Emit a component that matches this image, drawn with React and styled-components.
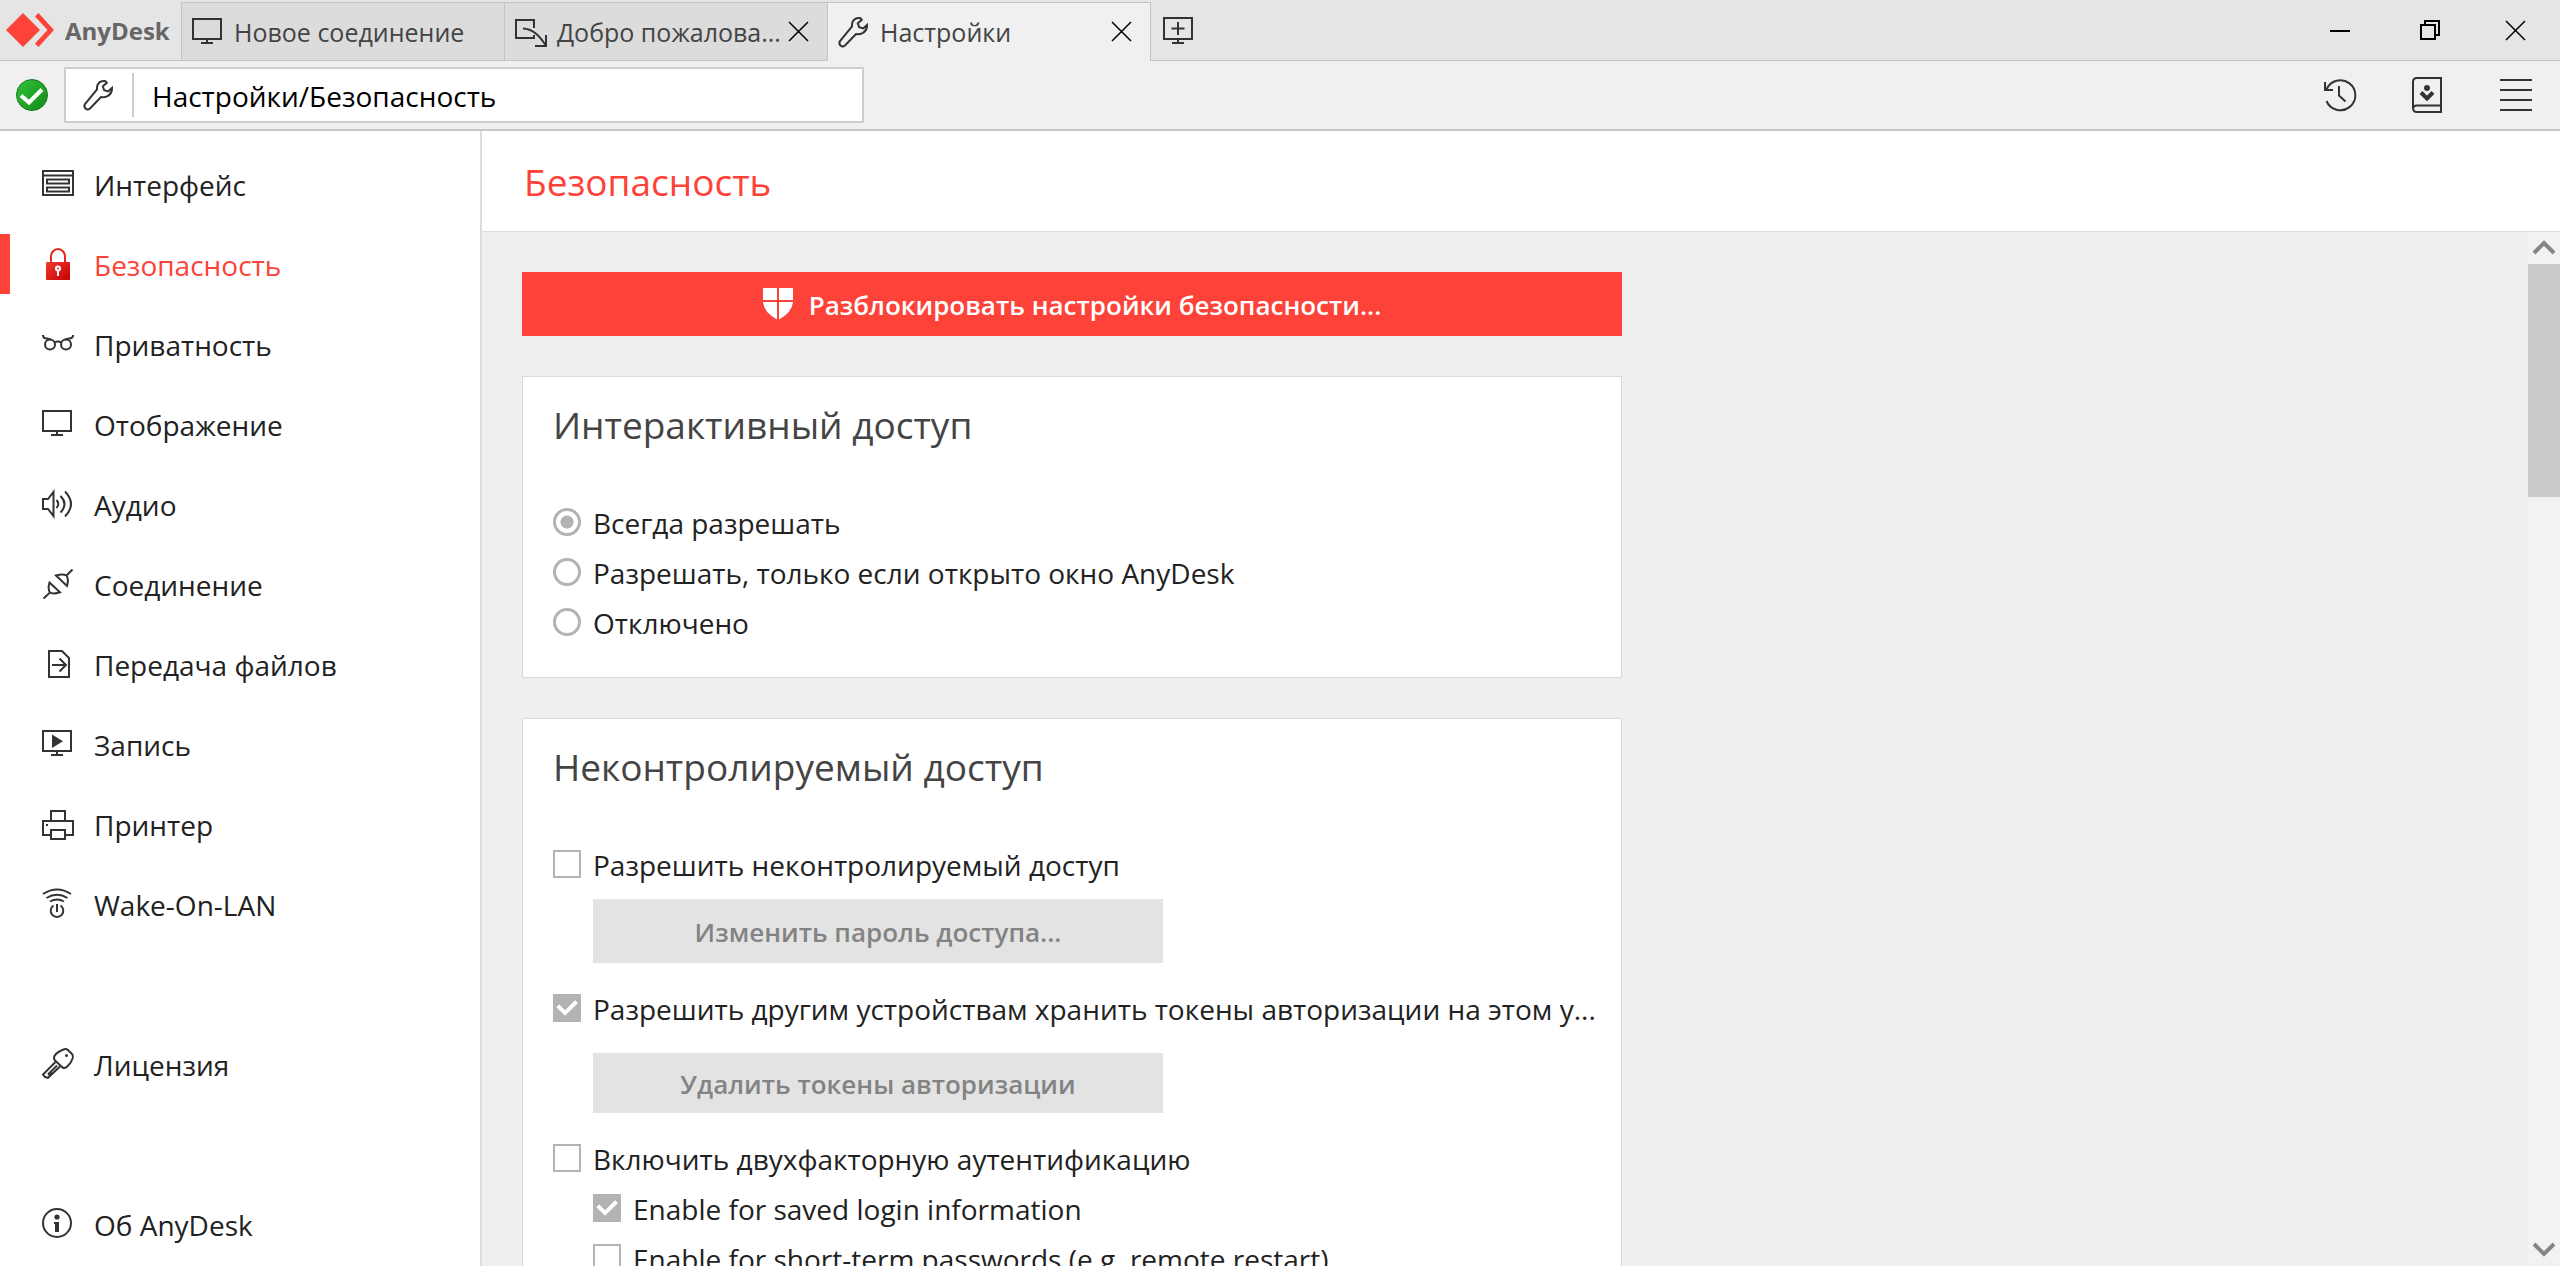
import React, { useState } from "react";
import styled, { createGlobalStyle } from "styled-components";

const menuGroups = [
  [
    { id: "interface", label: "Интерфейс" },
    { id: "security", label: "Безопасность" },
    { id: "privacy", label: "Приватность" },
    { id: "display", label: "Отображение" },
    { id: "audio", label: "Аудио" },
    { id: "connection", label: "Соединение" },
    { id: "files", label: "Передача файлов" },
    { id: "recording", label: "Запись" },
    { id: "printer", label: "Принтер" },
    { id: "wol", label: "Wake-On-LAN" },
  ],
  [{ id: "license", label: "Лицензия" }],
  [{ id: "about", label: "Об AnyDesk" }],
];

const accessModes = [
  { id: "always", label: "Всегда разрешать" },
  { id: "window", label: "Разрешать, только если открыто окно AnyDesk" },
  { id: "disabled", label: "Отключено" },
];

const shapes = {
  interface: (
    <>
      <path d="M1 3h30v24H1zM1 7.500h30" />
      <path d="M5 11.500h22v4H5zM5 19.500h22v4H5z" />
    </>
  ),
  security: (
    <>
      <defs>
        <linearGradient id="lock" x1="0" y1="0" x2="1" y2="1">
          <stop offset="0" stopColor="#f23a30" />
          <stop offset="1" stopColor="#c40000" />
        </linearGradient>
      </defs>
      <path d="M9 15V8.500a7 7.500 0 0 1 14 0V15" stroke="#e8261f" />
      <rect x="4" y="14" width="24" height="18" rx="1" fill="url(#lock)" stroke="none" />
      <circle cx="16" cy="20.500" r="2" stroke="#fff" />
      <path d="M16 22.500V28" stroke="#fff" />
    </>
  ),
  privacy: (
    <>
      <circle cx="8" cy="16.500" r="5" />
      <circle cx="24" cy="16.500" r="5" />
      <path d="M12.500 14.500Q16 12.500 19.500 14.500M1 7Q1 10.500 5 10.500L9 11.500M31 7Q31 10.500 27 10.500L23 11.500" />
    </>
  ),
  display: <path d="M1 3h28v20H1zM15 23v4M9 27h12" />,
  audio: (
    <>
      <path d="M1 11h5l5.500-7v24l-5.500-7H1z" />
      <path d="M14.500 12Q18 16 14.500 20M18.500 8Q26.500 16 18.500 24.500M23 3.500Q35 16 23 28.500" />
    </>
  ),
  connection: (
    <>
      <path d="M7.500 14.500L18 24.300Q11 26.500 8 24.500Q5.500 21 7.500 14.500zM8 24.500L1.500 30.500" />
      <path d="M14 7.500L25 18Q27 11 24.500 7.500Q21 5.500 14 7.500zM24.500 7.500L30.500 1.500" />
    </>
  ),
  files: <path d="M7 3h13l7 7v19H7zM10 17h14M17.500 10.500L24 17l-6.500 6.500" />,
  recording: (
    <>
      <path d="M1 3h28v20H1zM15 23v4M9 27h12" />
      <path d="M10 6.500v13.500l11-6.700z" fill="#333" stroke="none" />
    </>
  ),
  printer: (
    <>
      <path d="M9 13V3h14v10M9 27H1V13h30v14h-8" />
      <path d="M9 22h14v9H9z" />
      <path d="M4 17h2" />
    </>
  ),
  wol: (
    <>
      <path d="M1 6Q15-3 29 6M4.500 10Q15 3.500 25.500 10M8 13.500Q15 9.500 22 13.500" />
      <path d="M11.500 17.500a6.300 6.300 0 1 0 7 0M15 16v8" />
    </>
  ),
  license: (
    <>
      <path d="M21.500 1.500Q24 .5 26 2l4 4q1.500 1.500.8 4-1.500 4.500-5 8-2.800 2.800-5.300 1.500L13 12.500q-1.800-2-.5-4.500Q15 4 21.500 1.500z" />
      <path d="M13.500 14L1 26.500l2 2.500 3 .8L18 18.500M15 17.500L6 26.500l4-1.500" />
      <circle cx="24.500" cy="7.500" r="1.500" fill="#333" stroke="none" />
    </>
  ),
  about: (
    <>
      <circle cx="15" cy="15" r="14" />
      <circle cx="15" cy="9" r="2.600" fill="#333" stroke="none" />
      <path d="M12 14h5v10h-4v-8h-1z" fill="#333" stroke="none" />
    </>
  ),
  wrench: (
    <path d="M22.500 2.200Q17 1.500 14.500 6q-.8 2-.5 4.500L2 25q-1.500 2.500.5 4.500t4.500 0L18 18q3 .6 6-.6 5.300-2.700 5-8.400l-3.800 3.500-4-1.200-1.400-4 4-3.500z" />
  ),
  session: <path d="M19 12V4H1v18h18v-3M8 12.500Q21 13 31 30M31 19v11H20" />,
  newTab: <path d="M1 3h28v21H1zM15 24v4M9 28h12M15 7v13M8.500 13.500h13" />,
  history: <path d="M2.500 22a15 15 0 1 0 0-11.500M1 3v8h8M15 7v9.500l6.500 6" />,
  contacts: (
    <>
      <path d="M5-1h24v34H5q-4 0-4-4V3q0-4 4-4zM1 30q0-3.500 4-3.500h24" />
      <circle cx="15" cy="9" r="3" fill="#333" stroke="none" />
      <path d="M9 13.500l6 6 6-6" strokeWidth="4" />
    </>
  ),
  menu: <path d="M0 1h32M0 11h32M0 21h32M0 31h32" />,
  minimize: <path d="M6 16h20" stroke="#000" />,
  restore: <path d="M9 10h14v14H9zM13 10V6h14v14h-4" stroke="#000" />,
  close: <path d="M6 6l19 19M25 6L6 25" stroke="#000" strokeWidth="1.500" />,
  up: <path d="M6 21l10-10 10 10" stroke="#858585" strokeWidth="4" />,
  down: <path d="M6 10l10 10 10-10" stroke="#858585" strokeWidth="4" />,
};

const Icon = ({ name }) => (
  <IconSvg viewBox="0 0 32 32" aria-hidden="true">
    {shapes[name]}
  </IconSvg>
);

const Option = ({ type = "checkbox", nested, children, ...rest }) => (
  <OptionLabel $nested={nested}>
    {type === "radio" ? (
      <Radio type="radio" disabled {...rest} />
    ) : (
      <Checkbox type="checkbox" disabled {...rest} />
    )}
    <OptionText>{children}</OptionText>
  </OptionLabel>
);

const App = () => {
  const [active, setActive] = useState("security");
  const [address, setAddress] = useState("Настройки/Безопасность");

  const handleSelect = (e, id) => {
    e.preventDefault();
    setActive(id);
  };

  return (
    <Window>
      <GlobalStyle />
      <TitleBar>
        <Brand>
          <Logo viewBox="0 0 48 34" aria-hidden="true">
            <path d="M0 17L17 0l17 17-17 17z" />
            <path d="M29 3.500L32.500 0 48 17 32.500 34 29 30.500 41.500 17z" />
          </Logo>
          AnyDesk
        </Brand>
        <Tab>
          <Icon name="display" />
          <TabTitle>Новое соединение</TabTitle>
        </Tab>
        <Tab>
          <Icon name="session" />
          <TabTitle>Добро пожалова...</TabTitle>
          <TabClose aria-label="Закрыть вкладку">
            <Icon name="close" />
          </TabClose>
        </Tab>
        <Tab $active>
          <Icon name="wrench" />
          <TabTitle>Настройки</TabTitle>
          <TabClose aria-label="Закрыть вкладку">
            <Icon name="close" />
          </TabClose>
        </Tab>
        <TabFiller>
          <IconButton aria-label="Новая вкладка">
            <Icon name="newTab" />
          </IconButton>
          <WindowControls>
            <WindowButton aria-label="Свернуть">
              <Icon name="minimize" />
            </WindowButton>
            <WindowButton aria-label="Восстановить">
              <Icon name="restore" />
            </WindowButton>
            <WindowButton aria-label="Закрыть">
              <Icon name="close" />
            </WindowButton>
          </WindowControls>
        </TabFiller>
      </TitleBar>

      <Toolbar>
        <Status viewBox="0 0 32 32" aria-hidden="true">
          <defs>
            <linearGradient id="ok" x1="0" y1="0" x2="1" y2="1">
              <stop offset="0" stopColor="#2fc436" />
              <stop offset="1" stopColor="#15891c" />
            </linearGradient>
          </defs>
          <circle cx="16" cy="16" r="15.500" fill="url(#ok)" stroke="#1c7a22" />
          <path d="M5 16.500l8 7L26 10.500" fill="none" stroke="#fff" strokeWidth="4" />
        </Status>
        <AddressBar>
          <AddressIcon>
            <Icon name="wrench" />
          </AddressIcon>
          <AddressInput
            aria-label="Адрес"
            value={address}
            onChange={(e) => setAddress(e.target.value)}
          />
        </AddressBar>
        <Tools>
          <IconButton aria-label="История">
            <Icon name="history" />
          </IconButton>
          <IconButton aria-label="Адресная книга">
            <Icon name="contacts" />
          </IconButton>
          <IconButton aria-label="Меню">
            <Icon name="menu" />
          </IconButton>
        </Tools>
      </Toolbar>

      <Body>
        <Sidebar>
          {menuGroups.map((group) => (
            <MenuGroup key={group[0].id}>
              {group.map((item) => (
                <li key={item.id}>
                  <MenuLink
                    href={"#" + item.id}
                    $active={item.id === active}
                    onClick={(e) => handleSelect(e, item.id)}
                  >
                    <Icon name={item.id} />
                    <MenuText>{item.label}</MenuText>
                  </MenuLink>
                </li>
              ))}
            </MenuGroup>
          ))}
        </Sidebar>

        <Main>
          <Header>
            <PageTitle>Безопасность</PageTitle>
          </Header>
          <Scroller>
            <Content>
              <UnlockButton>
                <Shield viewBox="0 0 30 32" aria-hidden="true">
                  <path d="M0 0h14v12H0zM16 0h14v12H16zM0 14h14v17.500Q1 24.500 0 14zM16 14h14Q29 24.500 16 31.500z" />
                </Shield>
                <ButtonText>Разблокировать настройки безопасности...</ButtonText>
              </UnlockButton>

              <Card>
                <CardTitle>Интерактивный доступ</CardTitle>
                {accessModes.map((mode) => (
                  <Option
                    key={mode.id}
                    type="radio"
                    name="access"
                    defaultChecked={mode.id === "always"}
                  >
                    {mode.label}
                  </Option>
                ))}
              </Card>

              <Card>
                <CardTitle>Неконтролируемый доступ</CardTitle>
                <Option>Разрешить неконтролируемый доступ</Option>
                <CardButton disabled>
                  <ButtonText>Изменить пароль доступа...</ButtonText>
                </CardButton>
                <Option defaultChecked>
                  Разрешить другим устройствам хранить токены авторизации на этом у...
                </Option>
                <CardButton disabled $compact>
                  <ButtonText>Удалить токены авторизации</ButtonText>
                </CardButton>
                <Option>Включить двухфакторную аутентификацию</Option>
                <Option nested defaultChecked>
                  Enable for saved login information
                </Option>
                <Option nested>Enable for short-term passwords (e.g. remote restart)</Option>
              </Card>
            </Content>
            <ScrollBar>
              <ScrollButton aria-label="Вверх">
                <Icon name="up" />
              </ScrollButton>
              <Track>
                <Thumb />
              </Track>
              <ScrollButton aria-label="Вниз">
                <Icon name="down" />
              </ScrollButton>
            </ScrollBar>
          </Scroller>
        </Main>
      </Body>
    </Window>
  );
};

export default App;

const GlobalStyle = createGlobalStyle`
  * {
    box-sizing: border-box;
  }
  body {
    margin: 0;
    font-family: "Open Sans", "Noto Sans", sans-serif;
    font-size: 28px;
    color: #222;
    background: #efefef;
  }
  button, input {
    font-family: inherit;
  }
  button {
    border: none;
    padding: 0;
    background: none;
  }
`;
const Window = styled.div`
  display: flex;
  flex-direction: column;
  height: 100vh;
  overflow: hidden;
`;
const IconSvg = styled.svg`
  width: 32px;
  height: 32px;
  flex: none;
  display: block;
  overflow: visible;
  fill: none;
  stroke: #333;
  stroke-width: 2;
`;

const TitleBar = styled.header`
  display: flex;
  height: 61px;
  flex: none;
  background: #e5e5e5;
`;
const Brand = styled.div`
  display: flex;
  align-items: center;
  gap: 11px;
  width: 181px;
  padding-left: 6px;
  border-bottom: 1px solid #c3c3c3;
  font-size: 24px;
  font-weight: 700;
  color: #666;
`;
const Logo = styled.svg`
  width: 48px;
  height: 34px;
  flex: none;
  fill: #fd4239;
`;
const Tab = styled.div`
  display: flex;
  align-items: center;
  width: 323px;
  margin-top: 2px;
  padding: 0 12px 0 10px;
  border: 1px solid #c3c3c3;
  border-right: none;
  border-bottom-color: ${(props) => (props.$active ? "#f0f0f0" : "#c3c3c3")};
  background: ${(props) => (props.$active ? "#f0f0f0" : "#dcdcdc")};
`;
const TabTitle = styled.span`
  flex: 1;
  margin-left: 10px;
  white-space: nowrap;
  font-size: 25px;
  color: #444;
`;
const TabClose = styled.button`
  flex: none;
`;
const TabFiller = styled.div`
  display: flex;
  flex: 1;
  align-items: center;
  padding-left: 12px;
  border-left: 1px solid #c3c3c3;
  border-bottom: 1px solid #c3c3c3;
  margin-top: 2px;
`;
const IconButton = styled.button`
  width: 32px;
  height: 32px;
`;
const WindowControls = styled.div`
  display: flex;
  margin-left: auto;
`;
const WindowButton = styled.button`
  display: flex;
  justify-content: center;
  width: 88px;
`;

const Toolbar = styled.div`
  display: flex;
  align-items: center;
  height: 70px;
  flex: none;
  padding: 0 28px 0 16px;
  background: #f0f0f0;
  border-bottom: 2px solid #c8c8c8;
`;
const Status = styled.svg`
  width: 32px;
  height: 32px;
  flex: none;
`;
const AddressBar = styled.div`
  display: flex;
  align-items: center;
  width: 800px;
  height: 56px;
  margin-left: 16px;
  background: #fff;
  border: 2px solid #cdcdcd;
`;
const AddressIcon = styled.div`
  padding: 6px 17px;
  border-right: 2px solid #cdcdcd;
`;
const AddressInput = styled.input`
  flex: 1;
  min-width: 0;
  padding: 2px 18px 0;
  border: none;
  outline: none;
  background: none;
  font-size: 28px;
  color: #000;
`;
const Tools = styled.div`
  display: flex;
  gap: 56px;
  margin-left: auto;
`;

const Body = styled.div`
  display: flex;
  flex: 1;
  min-height: 0;
`;
const Sidebar = styled.nav`
  display: flex;
  flex-direction: column;
  gap: 80px;
  width: 482px;
  flex: none;
  padding-top: 13px;
  background: #fff;
  border-right: 2px solid #dcdcdc;
`;
const MenuGroup = styled.ul`
  list-style: none;
  margin: 0;
  padding: 0;

  li {
    padding: 10px 0;
  }
`;
const MenuLink = styled.a`
  display: flex;
  align-items: center;
  gap: 20px;
  height: 60px;
  padding-left: 32px;
  border-left: 10px solid ${(props) => (props.$active ? "#fd4239" : "transparent")};
  color: ${(props) => (props.$active ? "#fd4239" : "#222")};
  text-decoration: none;
`;
const MenuText = styled.span`
  padding-top: 2px;
`;

const Main = styled.main`
  display: flex;
  flex: 1;
  flex-direction: column;
  min-width: 0;
`;
const Header = styled.div`
  display: flex;
  align-items: center;
  height: 101px;
  flex: none;
  padding: 0 42px;
  background: #fff;
  border-bottom: 1px solid #dadada;
`;
const PageTitle = styled.h1`
  margin: 0;
  font-size: 37px;
  font-weight: 400;
  color: #fd4239;
`;
const Scroller = styled.div`
  display: flex;
  flex: 1;
  min-height: 0;
`;
const Content = styled.div`
  flex: 1;
  min-width: 0;
  padding: 40px;
  overflow: hidden;
`;
const UnlockButton = styled.button`
  display: flex;
  align-items: center;
  justify-content: center;
  gap: 16px;
  width: 100%;
  max-width: 1100px;
  height: 64px;
  background: #fd4239;
  color: #fff;
  font-size: 26px;
  font-weight: 600;
`;
const ButtonText = styled.span`
  padding-top: 2px;
`;
const Shield = styled.svg`
  width: 30px;
  height: 32px;
  fill: #fff;
`;
const Card = styled.section`
  max-width: 1100px;
  margin-top: 40px;
  padding: 20px 20px 30px 30px;
  background: #fff;
  border: 1px solid #d9d9d9;
`;
const CardTitle = styled.h2`
  margin: 0 0 44px;
  font-size: 37px;
  font-weight: 400;
  line-height: 56px;
  color: #444;
`;
const OptionLabel = styled.label`
  display: flex;
  align-items: center;
  gap: 12px;
  height: 50px;
  padding-left: ${(props) => (props.$nested ? "40px" : "0")};
`;
const OptionText = styled.span`
  padding-top: 2px;
  white-space: nowrap;
`;
const Radio = styled.input`
  appearance: none;
  width: 28px;
  height: 28px;
  flex: none;
  margin: 0;
  border: 3px solid #b3b3b3;
  border-radius: 50%;

  &:checked {
    background: radial-gradient(circle, #b3b3b3 6px, transparent 7px);
  }
`;
const Checkbox = styled.input`
  appearance: none;
  width: 28px;
  height: 28px;
  flex: none;
  margin: 0;
  border: 2px solid #b3b3b3;

  &:checked {
    border: none;
    background: #b3b3b3;
  }
  &:checked::after {
    content: "";
    display: block;
    height: 100%;
    background: #fff;
    clip-path: polygon(12% 47%, 22% 37%, 43% 58%, 79% 22%, 89% 32%, 43% 78%);
  }
`;
const CardButton = styled.button`
  display: flex;
  align-items: center;
  justify-content: center;
  width: 570px;
  height: ${(props) => (props.$compact ? "60px" : "64px")};
  margin: ${(props) => (props.$compact ? "20px" : "10px")} 0 20px 40px;
  background: #e3e3e3;
  color: #838383;
  font-size: 26px;
  font-weight: 600;
`;
const ScrollBar = styled.div`
  display: flex;
  flex-direction: column;
  width: 32px;
  background: #f2f2f2;
`;
const ScrollButton = styled.button`
  height: 32px;
`;
const Track = styled.div`
  flex: 1;
`;
const Thumb = styled.div`
  height: 24%;
  background: #cbcbcb;
`;
